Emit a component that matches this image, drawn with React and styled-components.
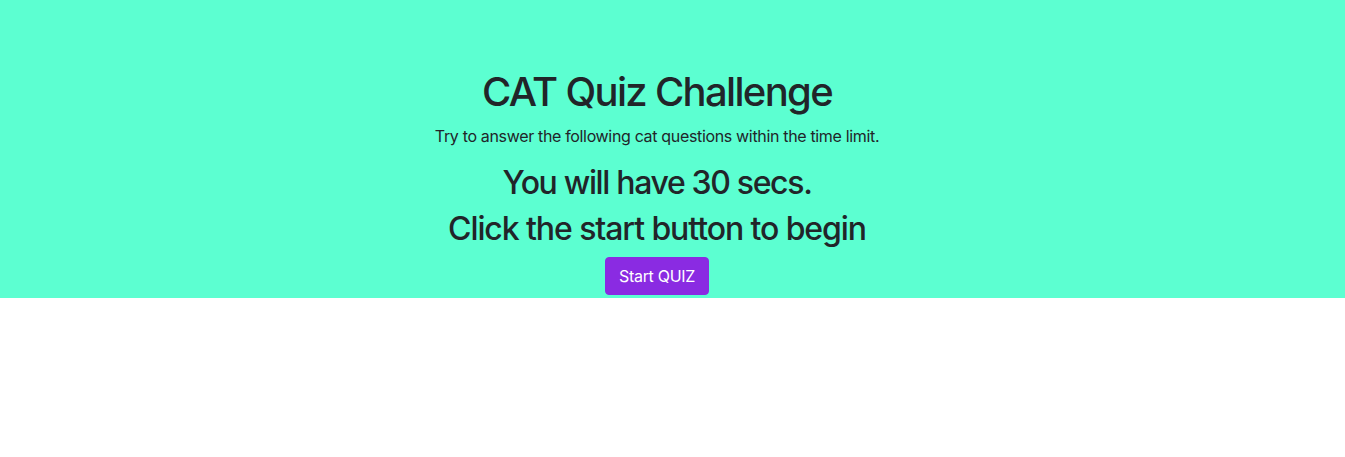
import React from "react";
import styled, { createGlobalStyle } from "styled-components";

const Global = createGlobalStyle`
  * { box-sizing: border-box; }
  body {
    margin: 0;
    background: #fff;
    font-family: Inter, "Noto Sans", "Liberation Sans", sans-serif;
    color: #212529;
  }
`;

const Hero = styled.section`
  background: #5cffd1;
  padding: 68px 31px 3px 0;
  display: flex;
  flex-direction: column;
  align-items: center;
  text-align: center;
`;

const Title = styled.h1`
  margin: 0 0 8px;
  font-size: 40px;
  font-weight: 500;
  line-height: 1.2;
  letter-spacing: -0.042em;
`;

const Lead = styled.p`
  margin: 0 0 16px;
  font-size: 16px;
  line-height: 24px;
  letter-spacing: -0.021em;
`;

const Sub = styled.h2`
  margin: 0 0 8px;
  font-size: 32px;
  font-weight: 500;
  line-height: 1.2;
  letter-spacing: ${(p) => p.$tracking || "-0.038em"};
`;

const StartButton = styled.button`
  height: 38px;
  padding: 0 13px;
  border: 1px solid #8a2be2;
  border-radius: 4px;
  background: #8a2be2;
  color: #fff;
  font-family: inherit;
  font-size: 16px;
  line-height: 24px;
  letter-spacing: -0.02em;
  cursor: pointer;
`;

export default function App() {
  return (
    <>
      <Global />
      <Hero>
        <Title>CAT Quiz Challenge</Title>
        <Lead>Try to answer the following cat questions within the time limit.</Lead>
        <Sub $tracking="-0.042em">You will have 30 secs.</Sub>
        <Sub $tracking="-0.034em">Click the start button to begin</Sub>
        <StartButton>Start QUIZ</StartButton>
      </Hero>
    </>
  );
}
